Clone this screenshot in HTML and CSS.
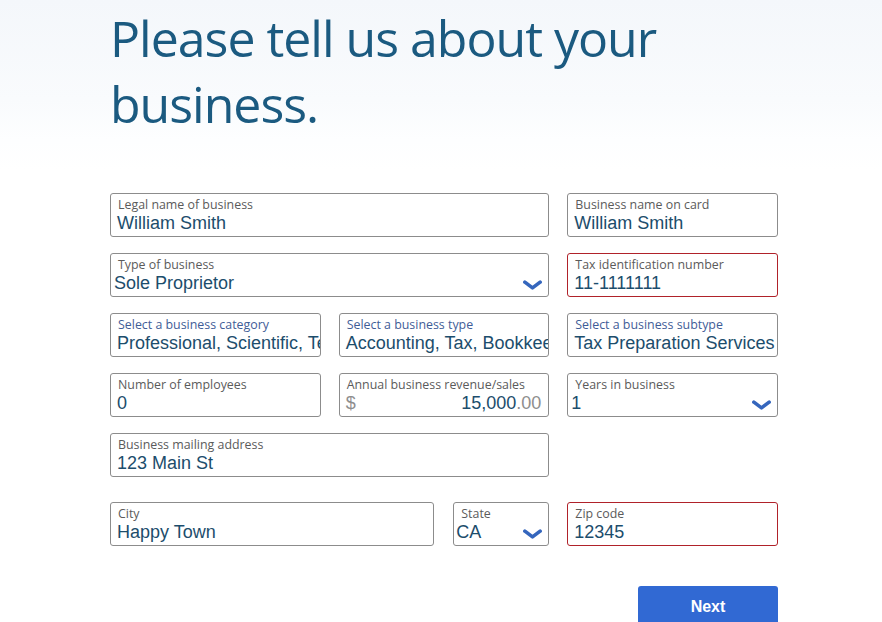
FILE: index.html
```html
<!DOCTYPE html>
<html lang="en">
<head>
<meta charset="utf-8">
<title>Tell us about your business</title>
<link rel="stylesheet" href="styles.css">
</head>
<body>
<main class="page">
  <h1 class="title">Please tell us about your business.</h1>
  <form class="form">
    <div class="field span2">
      <span class="label">Legal name of business</span>
      <span class="value">William Smith</span>
    </div>
    <div class="field">
      <span class="label">Business name on card</span>
      <span class="value">William Smith</span>
    </div>

    <div class="field select span2">
      <span class="label">Type of business</span>
      <span class="value">Sole Proprietor</span>
      <svg class="chev" viewBox="0 0 20 10"><path d="M2 2 L10 8 L18 2"/></svg>
    </div>
    <div class="field error">
      <span class="label">Tax identification number</span>
      <span class="value">11-1111111</span>
    </div>

    <div class="field">
      <span class="label accent">Select a business category</span>
      <span class="value">Professional, Scientific, Technical Services</span>
    </div>
    <div class="field">
      <span class="label accent">Select a business type</span>
      <span class="value">Accounting, Tax, Bookkeeping</span>
    </div>
    <div class="field">
      <span class="label accent">Select a business subtype</span>
      <span class="value">Tax Preparation Services</span>
    </div>

    <div class="field">
      <span class="label">Number of employees</span>
      <span class="value">0</span>
    </div>
    <div class="field">
      <span class="label">Annual business revenue/sales</span>
      <span class="value money"><span class="muted">$</span><span>15,000<span class="muted">.00</span></span></span>
    </div>
    <div class="field select">
      <span class="label">Years in business</span>
      <span class="value">1</span>
      <svg class="chev" viewBox="0 0 20 10"><path d="M2 2 L10 8 L18 2"/></svg>
    </div>

    <div class="field span2">
      <span class="label">Business mailing address</span>
      <span class="value">123 Main St</span>
    </div>

    <div class="city-row span2">
      <div class="field city">
        <span class="label">City</span>
        <span class="value">Happy Town</span>
      </div>
      <div class="field select state">
        <span class="label">State</span>
        <span class="value">CA</span>
        <svg class="chev" viewBox="0 0 20 10"><path d="M2 2 L10 8 L18 2"/></svg>
      </div>
    </div>
    <div class="field error zip">
      <span class="label">Zip code</span>
      <span class="value">12345</span>
    </div>

    <div class="actions">
      <button type="button" class="next">Next</button>
    </div>
  </form>
</main>
</body>
</html>
```

FILE: styles.css
```css
html, body {
  margin: 0;
  padding: 0;
}
body {
  background: linear-gradient(#f4f7fb 0px, #f9fbfd 100px, #fdfeff 140px, #ffffff 170px);
  min-height: 622px;
  font-family: "Open Sans", "Liberation Sans", sans-serif;
  overflow: hidden;
}
.page {
  width: 668px;
  margin-left: 110px;
}
.title {
  margin: 0;
  padding-top: 5px;
  font-family: "Open Sans", sans-serif;
  font-weight: 400;
  font-size: 50px;
  letter-spacing: -1px;
  line-height: 66px;
  color: #1b5a80;
}
.form {
  margin-top: 56px;
  display: grid;
  grid-template-columns: repeat(3, 1fr);
  column-gap: 18px;
  row-gap: 16px;
}
.span2 {
  grid-column: span 2;
}
.field {
  position: relative;
  box-sizing: border-box;
  height: 44px;
  border: 1px solid #8c8c8c;
  border-radius: 3px;
  background: #fff;
  padding: 3px 7px 0 6px;
  overflow: hidden;
  display: flex;
  flex-direction: column;
}
.field.error {
  border-color: #b0222a;
}
.label {
  padding-left: 1px;
  font-family: "Open Sans", sans-serif;
  font-size: 12.4px;
  line-height: 15px;
  color: #5b5b5b;
  white-space: nowrap;
}
.label.accent {
  color: #3f5d97;
}
.value {
  padding-top: 1px;
  font-family: "Liberation Sans", Arial, sans-serif;
  font-size: 18px;
  line-height: 21px;
  color: #1c4d6c;
  white-space: nowrap;
}
.select .value {
  margin-left: -3px;
}
.money {
  display: flex;
  justify-content: space-between;
  padding-right: 0;
}
.muted {
  color: #8e8e8e;
}
.chev {
  position: absolute;
  right: 6px;
  bottom: 6px;
  width: 19px;
  height: 10px;
}
.chev path {
  fill: none;
  stroke: #3566bd;
  stroke-width: 3.8;
  stroke-linecap: round;
  stroke-linejoin: round;
}
.city-row {
  margin-top: 9px;
  display: flex;
  gap: 19px;
}
.city {
  flex: 1;
}
.state {
  width: 96px;
}
.state .value {
  margin-left: -4px;
}
.zip {
  margin-top: 9px;
}
.actions {
  grid-column: 1 / -1;
  display: flex;
  justify-content: flex-end;
  margin-top: 24px;
}
.next {
  width: 140px;
  height: 42px;
  border: none;
  border-radius: 3px;
  background: #3169d3;
  color: #fff;
  font-family: "Liberation Sans", Arial, sans-serif;
  font-weight: 700;
  font-size: 16px;
  padding: 0;
  line-height: 40px;
  text-align: center;
}
```
